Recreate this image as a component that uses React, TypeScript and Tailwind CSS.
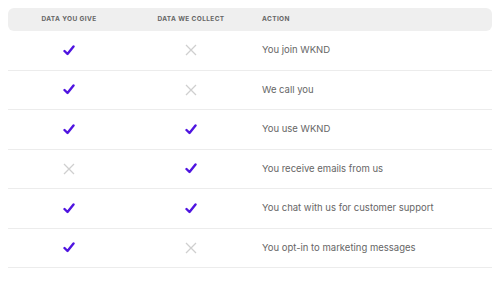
const rows: { give: boolean; collect: boolean; action: string }[] = [
  { give: true, collect: false, action: "You join WKND" },
  { give: true, collect: false, action: "We call you" },
  { give: true, collect: true, action: "You use WKND" },
  { give: false, collect: true, action: "You receive emails from us" },
  { give: true, collect: true, action: "You chat with us for customer support" },
  { give: true, collect: false, action: "You opt-in to marketing messages" },
];

function Check() {
  return (
    <svg width="12" height="11" viewBox="0 0 12 11" fill="none">
      <path d="M1.5 6 L4.5 9 L10.5 1.5" stroke="#4f14e0" strokeWidth="2.4" strokeLinecap="round" strokeLinejoin="round" />
    </svg>
  );
}

function Cross() {
  return (
    <svg width="12" height="12" viewBox="0 0 12 12" fill="none">
      <path d="M1 1 L11 11 M11 1 L1 11" stroke="#cfcfcf" strokeWidth="1.3" />
    </svg>
  );
}

function Mark({ on }: { on: boolean }) {
  return <div className="flex w-[122px] items-center justify-center">{on ? <Check /> : <Cross />}</div>;
}

export default function App() {
  return (
    <div className="h-[285px] w-[500px] bg-white px-2 pt-2" style={{ fontFamily: "Inter, 'Noto Sans', sans-serif" }}>
      <div className="flex h-[23px] items-center rounded-md bg-[#efefef] text-[6.5px] font-bold tracking-[0.06em] text-[#666]">
        <div className="w-[122px] text-center">DATA YOU GIVE</div>
        <div className="w-[122px] text-center">DATA WE COLLECT</div>
        <div className="pl-[10px]">ACTION</div>
      </div>
      {rows.map((r) => (
        <div key={r.action} className="flex h-[39.5px] items-center border-b border-[#ececec]">
          <Mark on={r.give} />
          <Mark on={r.collect} />
          <div className="pl-[10px] text-[9.5px] text-[#666]">{r.action}</div>
        </div>
      ))}
    </div>
  );
}
